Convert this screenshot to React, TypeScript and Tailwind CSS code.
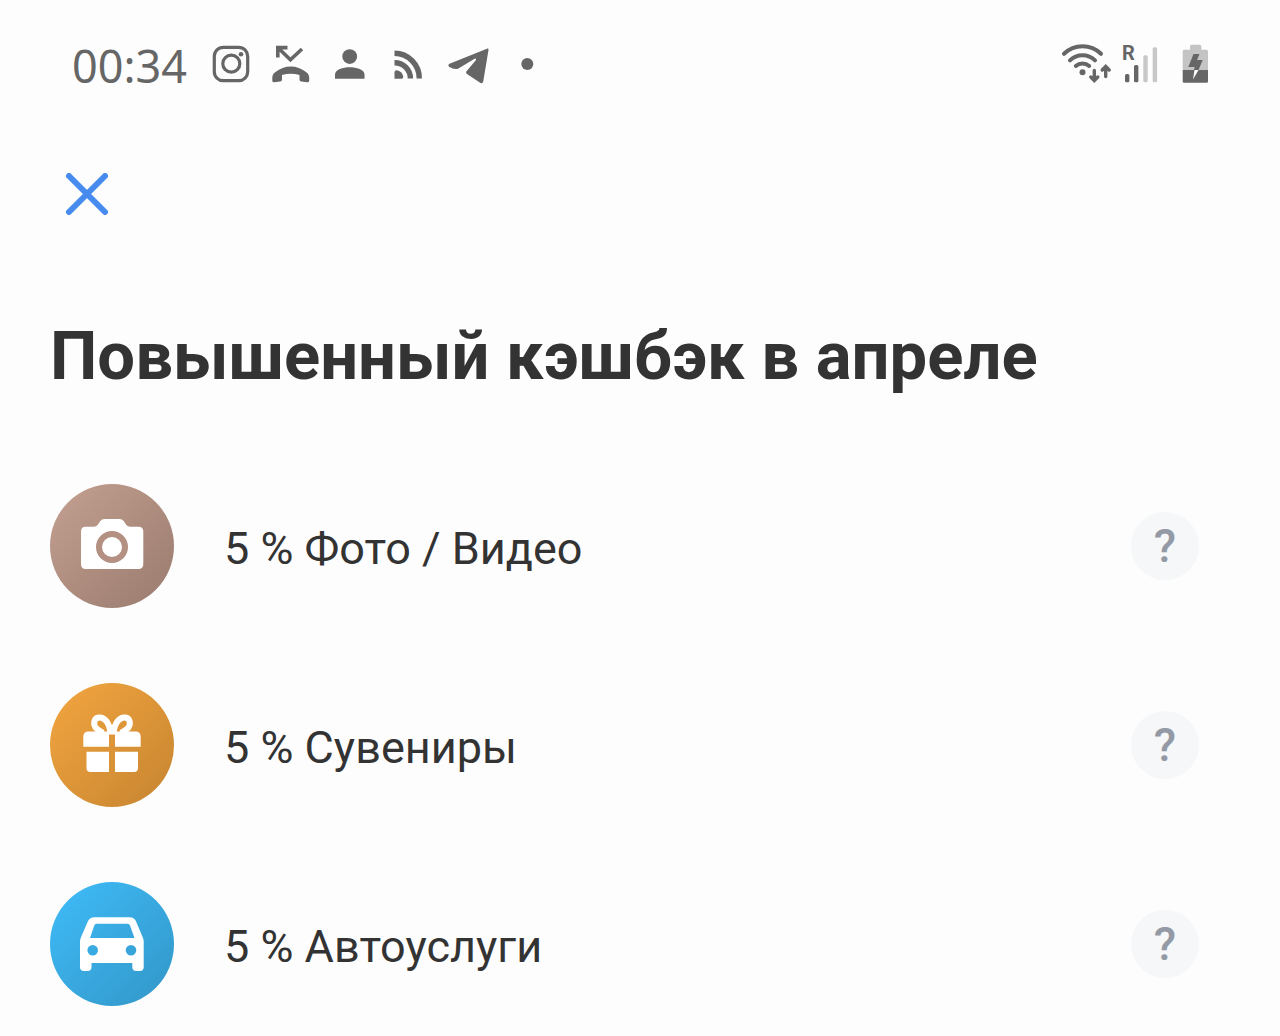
import React from "react";

const statusIcons = [
    {
        name: "instagram",
        art: (
            <g fill="none" stroke="#666" strokeWidth="3.2">
                <rect x="5.3" y="5.3" width="33.4" height="33.4" rx="9" />
                <circle cx="22.3" cy="21.7" r="8.5" />
                <circle cx="32" cy="12.3" r="2.3" fill="#666" stroke="none" />
            </g>
        ),
    },
    {
        name: "missed call",
        art: (
            <>
                <path d="M19.5 5.6H9.8V15.5M10 5.8L22.4 17.8L34 7" fill="none" stroke="#666" strokeWidth="3.6" />
                <path
                    d="M4.3 37.5C4 33.5 5 31.8 7.5 30C16 22.5 29.5 22.5 38 30C40.5 31.8 41.5 33.5 41.2 37.5V38.8Q41 40.5 39.2 40.3L33.3 39.5Q31.5 39.2 31.5 37.4V33Q22.7 30.4 14 33V37.4Q14 39.2 12.2 39.5L6.2 40.3Q4.5 40.5 4.3 38.8Z"
                    fill="#666"
                />
            </>
        ),
    },
    {
        name: "contact",
        art: (
            <g fill="#666">
                <circle cx="22.7" cy="14.6" r="7.4" />
                <path d="M8 36.8V32.5C8 27.5 16 25.3 22.7 25.3S37.5 27.5 37.5 32.5V36.8Z" />
            </g>
        ),
    },
    {
        name: "feed",
        art: (
            <>
                <path d="M8.5 36.7V30.5Q8.500 28 11 28.2Q16.5 29.5 17.3 35Q17.3 36.7 15.5 36.7Z" fill="#666" />
                <path d="M8.5 20.7A15.7 15.7 0 0 1 24.4 36.5M8.5 11.3A25 25 0 0 1 33.3 36.5" fill="none" stroke="#666" strokeWidth="5.4" />
            </>
        ),
    },
    {
        name: "telegram",
        art: (
            <path
                d="M42.5 6.6L4.5 21.8Q2.5 23 4 24.7Q9 27.8 13 26.7L30 16.5Q31.5 16.3 31 18L21.3 29.5Q20.6 31 22 32L35.5 41Q37.5 41.8 38.2 39.8L43.5 8Q43.6 6.3 42.5 6.6Z"
                fill="#666"
            />
        ),
    },
    { name: "more", art: <circle cx="23.3" cy="22" r="6" fill="#666" /> },
];

const categories = [
    {
        title: "5 % Фото / Видео",
        tint: "from-[#c4a091] to-[#997b6e]",
        art: (
            <>
                <path
                    fill="#fff"
                    d="M35.5 42.8H43.5Q46.5 42.8 48 40.5L50.3 37Q51.8 35 54.5 35H69.5Q72.2 35 73.7 37L76 40.5Q77.5 42.8 80.5 42.8H88.5Q93.3 42.8 93.3 47.6V80.2Q93.3 85 88.5 85H35.8Q31 85 31 80.2V47.6Q31 42.8 35.5 42.8Z"
                />
                <circle cx="62" cy="63" r="13" fill="none" stroke="#b39081" strokeWidth="6" />
            </>
        ),
    },
    {
        title: "5 % Сувениры",
        tint: "from-[#f3a640] to-[#c68430]",
        art: (
            <>
                <path
                    d="M60.5 50C59.5 40 54.5 33.5 48.5 34.5C43.5 35.5 42.8 42 46.5 45.5Q49 47.8 53 50M63.5 50C64.5 40 69.5 33.5 75.5 34.5C80.5 35.5 81.2 42 77.5 45.5Q75 47.8 71 50"
                    fill="none"
                    stroke="#fff"
                    strokeWidth="6"
                />
                <path
                    fill="#fff"
                    d="M38.3 48.5H85.7Q90.7 48.5 90.7 54V63.7H65V51.5H59V63.7H33.3V54Q33.3 48.5 38.3 48.5ZM36.5 68.8H59V89H40.5Q36.5 89 36.5 85ZM65 68.8H88V85Q88 89 84 89H65Z"
                />
            </>
        ),
    },
    {
        title: "5 % Автоуслуги",
        tint: "from-[#3fbcf9] to-[#3296c7]",
        art: (
            <path
                fill="#fff"
                fillRule="evenodd"
                d="M44.5 35.3H79.5Q84.8 35.3 86.3 40L93 56Q93.7 57.5 93.7 59.5V85Q93.7 89 89.7 89H86.3Q82.3 89 82.3 85V81H41.5V85Q41.5 89 37.5 89H34Q30 89 30 85V59.5Q30 57.5 30.7 56L37.6 40Q39.2 35.3 44.5 35.3ZM46.5 41.8Q44.8 41.8 44.3 43.5L40 56H84.5L80 43.5Q79.5 41.8 77.5 41.8ZM42.7 63A5.3 5.3 0 1 0 42.7 73.6A5.3 5.3 0 1 0 42.7 63ZM81 63A5.3 5.3 0 1 0 81 73.6A5.3 5.3 0 1 0 81 63Z"
            />
        ),
    },
];

function StatusBar() {
    return (
        <div className="flex items-center justify-between pl-[22px] -mr-[10px]">
            <div className="flex items-center">
                <span className="w-[137px] pt-1 font-['Noto_Sans',sans-serif] text-[45px] leading-[44px] text-[#666]">00:34</span>
                <div className="flex items-center gap-[15px]">
                    {statusIcons.map((icon) => (
                        <svg key={icon.name} viewBox="0 0 44 44" className="size-11" aria-label={icon.name}>
                            {icon.art}
                        </svg>
                    ))}
                </div>
            </div>

            <div className="flex items-center">
                <svg viewBox="0 0 52 44" className="h-11 w-[52px]" aria-label="wifi">
                    <g fill="none" stroke="#666" strokeWidth="4" strokeLinecap="round">
                        <path d="M3 11.8A26.5 26.5 0 0 1 40 11.8M9 18.4A17.5 17.5 0 0 1 34 18.4M14.8 24A10 10 0 0 1 28.2 24" />
                        <path d="M33.3 28.5V38M29.8 35L33.3 38.5L36.8 35M44.7 34.5V25M41.2 28L44.7 24.5L48.2 28" strokeWidth="3.4" />
                    </g>
                    <circle cx="21.5" cy="30.3" r="3" fill="#666" />
                </svg>
                <svg viewBox="0 -2 38 48" className="ml-2 h-12 w-[38px]" aria-label="signal">
                    <text x="1" y="17.6" fontSize="20" fontWeight="700" fontFamily="Roboto, sans-serif" fill="#666">
                        R
                    </text>
                    <rect x="4" y="32" width="4.4" height="8.3" rx="1.5" fill="#666" />
                    <rect x="13" y="23" width="4.4" height="17.3" rx="1.5" fill="#666" />
                    <rect x="22.3" y="13.3" width="4.4" height="27" rx="1.5" fill="#c8c8c8" />
                    <rect x="31.7" y="5.3" width="4.4" height="35" rx="1.5" fill="#c8c8c8" />
                </svg>
                <svg viewBox="0 0 28 44" className="ml-[22px] h-11 w-7" aria-label="battery charging">
                    <path d="M9 7.7V4.2Q9 2.7 10.5 2.7H18.8Q20.3 2.7 20.3 4.2V7.7H25.5Q27 7.7 27 9.2V28H1.7V9.2Q1.7 7.7 3.2 7.7Z" fill="#c4c4c4" />
                    <path d="M1.7 28H27V39.2Q27 40.7 25.5 40.7H3.2Q1.7 40.7 1.7 39.2Z" fill="#666" />
                    <path d="M12.5 12H18.5L16 18H21.7L17.5 28H12.8L13.8 25H7.3Z" fill="#666" />
                    <path d="M13.5 28H17.5L12 37.5Z" fill="#fff" />
                </svg>
            </div>
        </div>
    );
}

export default function App() {
    return (
        <main className="min-h-screen bg-[#fdfdfd] pt-10 pb-[30px] pl-[50px] pr-[81px] font-[Roboto,sans-serif] text-[#333]">
            <StatusBar />

            <button type="button" aria-label="Закрыть" className="ml-4 mt-[85px] block">
                <svg viewBox="0 0 42 42" className="size-[42px]">
                    <path d="M3 3L39 39M39 3L3 39" fill="none" stroke="#478bee" strokeWidth="6" strokeLinecap="round" />
                </svg>
            </button>

            <h1 className="mt-[101px] text-[67px] font-bold leading-[80px]">Повышенный кэшбэк в апреле</h1>

            <ul className="mt-[88px] flex flex-col gap-[75px]">
                {categories.map((item) => (
                    <li key={item.title} className="flex items-center">
                        <span className={`size-[124px] shrink-0 rounded-full bg-linear-to-br ${item.tint}`}>
                            <svg viewBox="0 0 124 124" className="size-full" aria-hidden="true">
                                {item.art}
                            </svg>
                        </span>
                        <span className="ml-[50px] flex-1 pt-1.5 text-[45px] leading-[56px]">{item.title}</span>
                        <button type="button" className="size-[68px] shrink-0 rounded-full bg-[#f5f7f8] text-[46px] font-medium leading-[68px] text-[#949aa5]">
                            ?
                        </button>
                    </li>
                ))}
            </ul>
        </main>
    );
}
